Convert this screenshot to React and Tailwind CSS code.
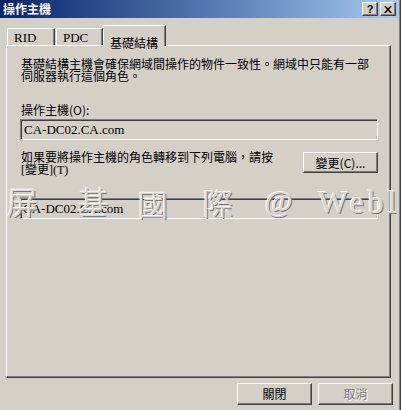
export default function App() {
  const raised =
    "border border-t-white border-l-white border-r-[#404040] border-b-[#404040] shadow-[inset_-1px_-1px_0_#808080]";
  const sunken =
    "border border-t-[#808080] border-l-[#808080] border-r-white border-b-white shadow-[inset_1px_1px_0_#404040]";
  const cjk = "font-['Noto_Sans_CJK_TC','Noto_Sans_CJK_SC',sans-serif]";
  const serif = "font-['Liberation_Serif','Noto_Sans_CJK_TC',serif]";
  const wm =
    "absolute text-[#d8d4cc] [text-shadow:-1px_-1px_0_#ffffff,1px_1px_0_#7a7a7a] leading-none";

  return (
    <div className="w-[401px] h-[410px] bg-[#d4d0c8] border-r border-[#404040] overflow-hidden">
      <div className={`relative w-[400px] h-[410px] border-r border-[#808080] ${cjk} text-black`}>
        {/* Title bar */}
        <div className="h-[18px] bg-linear-to-r from-[#0a246a] to-[#a6caf0] flex items-center justify-between pl-[3px] pr-[3px]">
          <span className="text-white font-bold text-[12px] leading-[12px]">操作主機</span>
          <div className="flex gap-[2px] items-center">
            <div className={`w-[16px] h-[14px] bg-[#d4d0c8] ${raised} flex items-center justify-center`}>
              <span className="font-['Liberation_Sans',sans-serif] font-bold text-[11px] leading-[11px]">?</span>
            </div>
            <div className={`w-[16px] h-[14px] bg-[#d4d0c8] ${raised} flex items-center justify-center`}>
              <svg width="8" height="7" viewBox="0 0 8 7">
                <path d="M0 0h2l2 2.5L6 0h2L5 3.5 8 7H6L4 4.5 2 7H0l3-3.5z" fill="#000" />
              </svg>
            </div>
          </div>
        </div>

        {/* Tabs */}
        <div className="h-[27px] flex items-end pl-[7px]">
          <div className="w-[48px] h-[17px] border-l border-t border-white rounded-tl-[2px] border-r border-r-[#404040] shadow-[inset_-1px_0_0_#808080] pl-[6px] flex items-center">
            <span className={`${serif} text-[13px] leading-[13px]`}>RID</span>
          </div>
          <div className="ml-[1px] w-[47px] h-[17px] border-l border-t border-white rounded-tl-[2px] border-r border-r-[#404040] shadow-[inset_-1px_0_0_#808080] pl-[6px] flex items-center">
            <span className={`${serif} text-[13px] leading-[13px]`}>PDC</span>
          </div>
          <div className="relative z-10 -mb-px w-[63px] h-[21px] bg-[#d4d0c8] border-l border-t border-white rounded-tl-[2px] border-r border-r-[#404040] shadow-[inset_-1px_0_0_#808080] pl-[6px] pt-[3px]">
            <span className="text-[12px] leading-[12px]">基礎結構</span>
          </div>
        </div>

        {/* Panel */}
        <div className={`ml-[6px] w-[385px] h-[333px] ${raised} pt-[12px] pl-[13px] pr-[12px] flex flex-col`}>
          <p className="text-[12px] leading-[12px] pl-[1px]">
            基礎結構主機會確保網域間操作的物件一致性。網域中只能有一部
            <br />
            伺服器執行這個角色。
          </p>
          <p className="mt-[22px] text-[12px] leading-[12px] pl-[1px]">操作主機(O):</p>
          <div className={`mt-[3px] h-[21px] ${sunken} pl-[3px] flex items-center`}>
            <span className={`${serif} text-[13px] leading-[13px]`}>CA-DC02.CA.com</span>
          </div>
          <div className="mt-[11px] flex justify-between items-start">
            <p className="text-[12px] leading-[12px] pl-[1px]">
              如果要將操作主機的角色轉移到下列電腦，請按
              <br />
              <span className={`${serif} text-[12px]`}>[變更](T)</span>
            </p>
            <div className={`mt-[1px] w-[75px] h-[21px] ${raised} flex items-center justify-center text-[12px] leading-[12px]`}>
              變更(C)...
            </div>
          </div>
          <div className={`mt-[22px] h-[21px] ${sunken} pl-[2px] flex items-center`}>
            <span className={`${serif} text-[13px] leading-[13px]`}>CA-DC02.CA.com</span>
          </div>
        </div>

        {/* Bottom buttons */}
        <div className="mt-[5px] flex justify-end gap-[6px] pr-[6px]">
          <div className={`w-[75px] h-[22px] ${raised} flex items-center justify-center text-[12px] leading-[12px]`}>
            關閉
          </div>
          <div className={`w-[75px] h-[22px] ${raised} flex items-center justify-center text-[12px] leading-[12px] text-[#808080] [text-shadow:1px_1px_0_#ffffff]`}>
            取消
          </div>
        </div>

        {/* Watermark overlay */}
        <span className={`${wm} left-[7px] top-[185px] text-[31px] font-['Noto_Sans_CJK_TC',serif] font-light`}>屏</span>
        <span className={`${wm} left-[78px] top-[185px] text-[31px] font-['Noto_Sans_CJK_TC',serif] font-light`}>基</span>
        <span className={`${wm} left-[138px] top-[188px] text-[30px] font-['Noto_Sans_CJK_TC',serif] font-light`}>國</span>
        <span className={`${wm} left-[203px] top-[187px] text-[30px] font-['Noto_Sans_CJK_TC',serif] font-light`}>際</span>
        <span className={`${wm} left-[265px] top-[186px] text-[30px] font-['Liberation_Serif',serif] tracking-[0px]`}>@</span>
        <span className={`${wm} left-[318px] top-[186px] text-[32px] font-['Liberation_Serif',serif] tracking-[4px]`}>Webli</span>
      </div>
    </div>
  );
}
